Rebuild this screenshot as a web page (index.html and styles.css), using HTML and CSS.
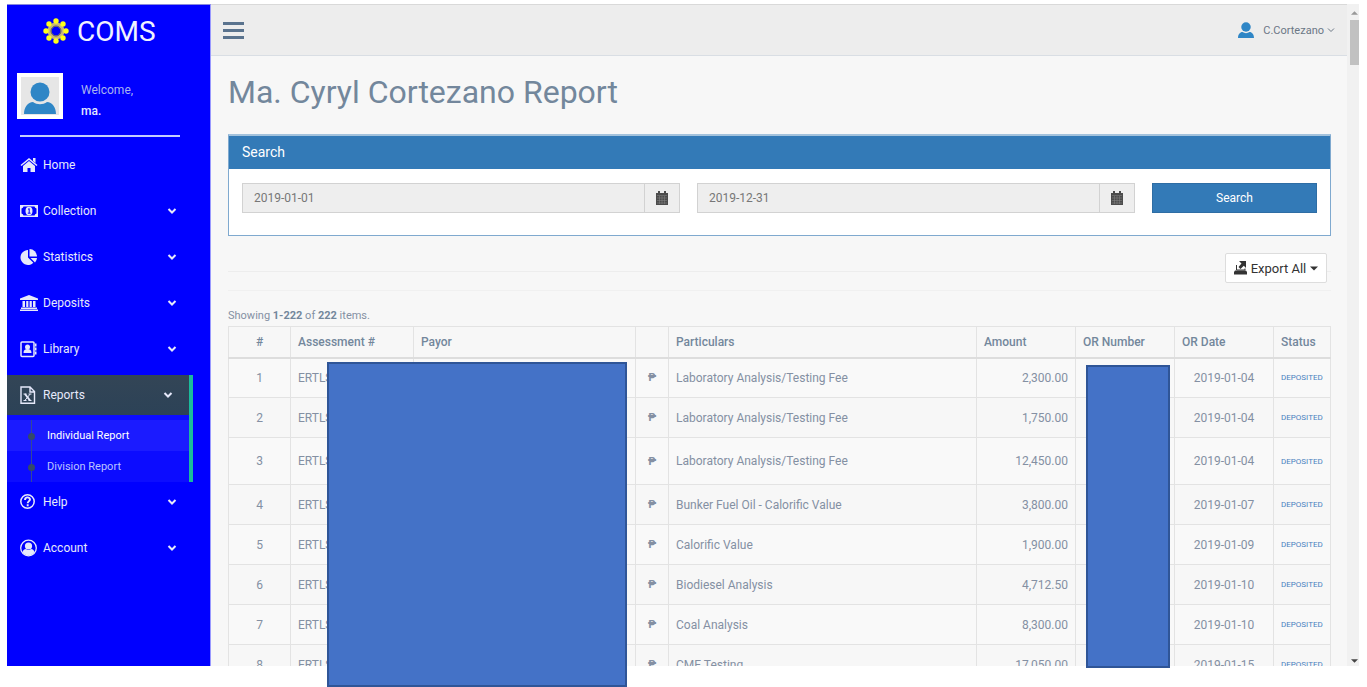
FILE: index.html
```html
<!DOCTYPE html>
<html lang="en">
<head>
    <meta charset="UTF-8">
    <meta name="viewport" content="width=device-width, initial-scale=1.0">
    <title>COMS - Individual Report</title>
    <link rel="stylesheet" href="styles.css">
</head>
<body>

<!-- shared icons -->
<svg class="sprite" aria-hidden="true">
    <symbol id="chevron" viewBox="0 0 10 10"><path d="M1.5 3 5 6.5 8.500 3" fill="none" stroke="currentColor" stroke-width="2"/></symbol>
    <symbol id="user" viewBox="0 0 32 32"><circle cx="16" cy="10" r="9.500"/><path d="M0 32c0-7 4-12 9-12 4 3 10 3 14 0 5 0 9 5 9 12z"/></symbol>
    <symbol id="calendar" viewBox="0 0 12 14"><path d="M0 2h12v12H0z"/><path d="M2 0h2v3H2zM8 0h2v3H8z"/><path d="M1 4.500h10M1 7h10M1 9.500h10M1 12h10M3.500 5v8M6 5v8M8.500 5v8" stroke="#888" stroke-width=".5"/></symbol>
</svg>

<div class="window">
    <div class="app">
        <aside class="sidebar">
            <a class="brand" href="#">
                <svg width="26" height="26" viewBox="0 0 26 26">
                    <circle cx="13" cy="13" r="6.500" fill="none" stroke="#c9b878" stroke-width="4"/>
                    <circle cx="13" cy="13" r="5" fill="none" stroke="#5a5a66" stroke-width="1"/>
                    <g fill="#ffff1a">
                        <circle cx="13" cy="3" r="2.700"/><circle cx="20" cy="6" r="2.700"/><circle cx="23" cy="13" r="2.700"/><circle cx="20" cy="20" r="2.700"/>
                        <circle cx="13" cy="23" r="2.700"/><circle cx="6" cy="20" r="2.700"/><circle cx="3" cy="13" r="2.700"/><circle cx="6" cy="6" r="2.700"/>
                    </g>
                </svg>
                <span>COMS</span>
            </a>

            <div class="profile">
                <div class="avatar"><svg><use href="#user"/></svg></div>
                <div class="profile-info">
                    <span>Welcome,</span>
                    <strong>ma.</strong>
                </div>
            </div>

            <nav class="menu">
                <a href="#">
                    <svg class="icon" viewBox="0 0 18 18"><path d="M9 5 3 10v6h4.500v-4h3v4H15v-6z"/><path d="M1 9.500 9 3l8 6.500" fill="none" stroke="currentColor" stroke-width="1.500"/><path d="M13 2h2.500v5L13 5z"/></svg>
                    Home
                </a>
                <a href="#">
                    <svg class="icon" viewBox="0 0 18 18"><path fill-rule="evenodd" d="M0 3h18v12H0zM3.500 4.500a2.500 2.500 0 0 1-2 2v5a2.500 2.500 0 0 1 2 2h11a2.500 2.500 0 0 1 2-2v-5a2.500 2.500 0 0 1-2-2z"/><ellipse cx="9" cy="9" rx="3.500" ry="4.200"/><path d="M8 7.500 9.200 6.500v4.500M7.800 11.200h2.800" fill="none" stroke="#00f" stroke-width="1"/></svg>
                    Collection
                    <svg class="chevron"><use href="#chevron"/></svg>
                </a>
                <a href="#">
                    <svg class="icon" viewBox="0 0 18 18"><path d="M8 2v7.500l5.300 5.300A7.500 7.500 0 1 1 8 2z"/><path d="M9.500 1A7.500 7.500 0 0 1 17 8.500H9.500z"/><path d="M10.500 10H17a7 7 0 0 1-2 4.500z"/></svg>
                    Statistics
                    <svg class="chevron"><use href="#chevron"/></svg>
                </a>
                <a href="#">
                    <svg class="icon" viewBox="0 0 18 18"><path d="M9 1 18 4.500V6H0V4.500zM2.500 7H5v6H2.500zM6.200 7h2.200v6H6.200zM9.600 7h2.200v6H9.600zM13 7h2.500v6H13zM1 13.500h16V15H1zM0 15.500h18V17H0z"/></svg>
                    Deposits
                    <svg class="chevron"><use href="#chevron"/></svg>
                </a>
                <a href="#">
                    <svg class="icon" viewBox="0 0 18 18"><rect x="1" y="2" width="13" height="14.500" rx="1" fill="none" stroke="currentColor" stroke-width="1.500"/><circle cx="7.500" cy="7" r="2.500"/><path d="M3.500 13c0-3 1.500-4 4-4s4 1 4 4zM15 3.500h1.500v3H15zM15 7.500h1.500v3H15zM15 11.500h1.500v3H15z"/></svg>
                    Library
                    <svg class="chevron"><use href="#chevron"/></svg>
                </a>
                <div class="open">
                    <a class="active" href="#">
                        <svg class="icon" viewBox="0 0 18 18"><path d="M1 1h9l4.500 4.500v11.700H1zM10 1v5h4.500" fill="none" stroke="currentColor" stroke-width="1.400"/><path d="M5 8l5 6.500" fill="none" stroke="currentColor" stroke-width="2"/><path d="M10.200 8 4.800 14.500M3.500 8h3M8.500 8h3M3.500 14.500h3M8.500 14.500h3" fill="none" stroke="currentColor" stroke-width="1"/></svg>
                        Reports
                        <svg class="chevron"><use href="#chevron"/></svg>
                    </a>
                    <ul class="submenu">
                        <li class="current"><a href="#">Individual Report</a></li>
                        <li><a href="#">Division Report</a></li>
                    </ul>
                </div>
                <a href="#">
                    <svg class="icon" viewBox="0 0 18 18"><circle cx="7.500" cy="8.500" r="6.700" fill="none" stroke="currentColor" stroke-width="1.500"/><path d="M5 7c0-3.500 5-3.300 5-.5 0 1.500-2.300 1.800-2.300 3.700M7.700 11.200v2" fill="none" stroke="currentColor" stroke-width="1.900"/></svg>
                    Help
                    <svg class="chevron"><use href="#chevron"/></svg>
                </a>
                <a href="#">
                    <svg class="icon" viewBox="0 0 18 18"><circle cx="8.500" cy="9" r="7.800" fill="none" stroke="currentColor" stroke-width="1.300"/><circle cx="8.500" cy="7" r="3.600"/><path d="M2.500 13c.5-2 2-3 3.500-3 1.500 1.300 3.500 1.300 5 0 1.500 0 3 1 3.500 3a7 7 0 0 1-12 0z"/></svg>
                    Account
                    <svg class="chevron"><use href="#chevron"/></svg>
                </a>
            </nav>
        </aside>

        <main class="content">
            <header class="topbar">
                <button class="toggle" type="button" aria-label="Toggle menu"><i></i><i></i><i></i></button>
                <a class="account" href="#">
                    <svg class="account-pic"><use href="#user"/></svg>
                    C.Cortezano
                    <svg class="caret-thin" viewBox="0 0 8 8"><path d="M1 2.500 4 5.500 7 2.500" fill="none" stroke="currentColor"/></svg>
                </a>
            </header>

            <div class="page">
                <h1>Ma. Cyryl Cortezano Report</h1>

                <section class="panel">
                    <h2>Search</h2>
                    <form class="search-form">
                        <div class="date-group">
                            <input type="text" value="2019-01-01" aria-label="Start date" readonly>
                            <button type="button" aria-label="Pick start date"><svg width="12" height="14"><use href="#calendar"/></svg></button>
                        </div>
                        <div class="date-group">
                            <input type="text" value="2019-12-31" aria-label="End date" readonly>
                            <button type="button" aria-label="Pick end date"><svg width="12" height="14"><use href="#calendar"/></svg></button>
                        </div>
                        <button class="btn-search" type="button">Search</button>
                    </form>
                </section>

                <div class="toolbar">
                    <button class="btn-export" type="button">
                        <svg width="13" height="14" viewBox="0 0 13 14"><path d="M5 0h7v7L9.800 4.800 6.500 8 4.500 6 7.500 2.500z"/><path d="M2.500 4v5H11V7.500" fill="none" stroke="currentColor"/><path d="M1 9.500h11l1 1.500v2.500H0V11z"/></svg>
                        Export All
                        <svg width="8" height="5" viewBox="0 0 8 5"><path d="M0 .5h8L4 4.500z"/></svg>
                    </button>
                </div>

                <p class="summary">Showing <b>1-222</b> of <b>222</b> items.</p>

                <table class="report">
                    <colgroup>
                        <col class="c-num"><col class="c-assess"><col class="c-payor"><col class="c-peso"><col>
                        <col class="c-mid"><col class="c-mid"><col class="c-mid"><col class="c-status">
                    </colgroup>
                    <thead>
                        <tr><th class="center">#</th><th>Assessment #</th><th>Payor</th><th></th><th>Particulars</th><th>Amount</th><th>OR Number</th><th>OR Date</th><th>Status</th></tr>
                    </thead>
                    <tbody>
                        <tr><td class="center">1</td><td>ERTLS</td><td></td><td class="peso">₱</td><td>Laboratory Analysis/Testing Fee</td><td class="amount">2,300.00</td><td></td><td class="center">2019-01-04</td><td class="status">DEPOSITED</td></tr>
                        <tr><td class="center">2</td><td>ERTLS</td><td></td><td class="peso">₱</td><td>Laboratory Analysis/Testing Fee</td><td class="amount">1,750.00</td><td></td><td class="center">2019-01-04</td><td class="status">DEPOSITED</td></tr>
                        <tr class="tall"><td class="center">3</td><td>ERTLS</td><td></td><td class="peso">₱</td><td>Laboratory Analysis/Testing Fee</td><td class="amount">12,450.00</td><td></td><td class="center">2019-01-04</td><td class="status">DEPOSITED</td></tr>
                        <tr><td class="center">4</td><td>ERTLS</td><td></td><td class="peso">₱</td><td>Bunker Fuel Oil - Calorific Value</td><td class="amount">3,800.00</td><td></td><td class="center">2019-01-07</td><td class="status">DEPOSITED</td></tr>
                        <tr><td class="center">5</td><td>ERTLS</td><td></td><td class="peso">₱</td><td>Calorific Value</td><td class="amount">1,900.00</td><td></td><td class="center">2019-01-09</td><td class="status">DEPOSITED</td></tr>
                        <tr><td class="center">6</td><td>ERTLS</td><td></td><td class="peso">₱</td><td>Biodiesel Analysis</td><td class="amount">4,712.50</td><td></td><td class="center">2019-01-10</td><td class="status">DEPOSITED</td></tr>
                        <tr><td class="center">7</td><td>ERTLS</td><td></td><td class="peso">₱</td><td>Coal Analysis</td><td class="amount">8,300.00</td><td></td><td class="center">2019-01-10</td><td class="status">DEPOSITED</td></tr>
                        <tr><td class="center">8</td><td>ERTLS</td><td></td><td class="peso">₱</td><td>CME Testing</td><td class="amount">17,050.00</td><td></td><td class="center">2019-01-15</td><td class="status">DEPOSITED</td></tr>
                    </tbody>
                </table>
            </div>
        </main>

        <div class="scrollbar">
            <svg viewBox="0 0 8 5"><path d="M0 5h8L4 1z" fill="#999"/></svg>
            <div class="thumb"></div>
            <svg viewBox="0 0 8 5"><path d="M0 0h8L4 4z" fill="#444"/></svg>
        </div>
    </div>

    <!-- covers for the private columns -->
    <div class="cover cover-payor"></div>
    <div class="cover cover-or"></div>
</div>

</body>
</html>
```
FILE: styles.css
```css
* {
    box-sizing: border-box;
}
body {
    margin: 0;
    padding: 4px 8px 0 7px;
    height: 100vh;
    overflow: hidden;
    background: #fff;
    font-family: Roboto, "Liberation Sans", sans-serif;
    font-size: 12px;
    color: #8490a3;
}
a {
    color: inherit;
    text-decoration: none;
}
svg {
    fill: currentColor;
    flex: none;
}
button, input {
    font: inherit;
}
.sprite {
    display: none;
}
.window {
    position: relative;
}
.app {
    display: flex;
    height: calc(100vh - 25px);
    overflow: hidden;
}

/* sidebar */
.sidebar {
    flex: 0 0 204px;
    background: #00f;
    border-right: 1px solid #99f;
    border-top: 1px solid #88d;
    color: #e6e9fb;
}
.brand {
    display: flex;
    align-items: center;
    gap: 8px;
    height: 52px;
    padding-left: 36px;
    font-size: 28px;
    color: #f0f2ff;
}
.profile {
    display: flex;
    gap: 18px;
    margin: 16px 24px 0 10px;
    height: 62px;
}
.avatar {
    width: 46px;
    height: 46px;
    padding: 5px 3px 0;
    background: #e6e6e6;
    border: 4px solid #fff;
    color: #2f86c6;
}
.avatar svg {
    display: block;
    width: 32px;
    height: 32px;
}
.profile-info {
    display: flex;
    flex-direction: column;
    gap: 6px;
    padding-top: 10px;
    line-height: 15px;
    color: #a9b4f0;
}
.profile-info strong {
    font-weight: 500;
    color: #e4e8ff;
}
.menu {
    width: 186px;
}
.menu::before {
    content: "";
    display: block;
    height: 2px;
    margin: 0 13px 8px;
    background: #c4ccff;
}
.menu > a, .active {
    display: flex;
    align-items: center;
    gap: 5px;
    height: 40px;
    margin-bottom: 6px;
    padding: 0 16px 0 13px;
}
.icon {
    width: 18px;
    height: 18px;
}
.chevron {
    width: 10px;
    height: 10px;
    margin-left: auto;
}
.open {
    border-right: 4px solid #1abb9c;
    background: #0c0cff;
}
.menu .active {
    margin: 0;
    background: linear-gradient(#334556, #2c4257);
}
.submenu {
    margin: 0;
    padding: 5px 0 0;
    list-style: none;
    font-size: 11px;
}
.submenu li {
    position: relative;
    height: 31px;
    padding-left: 40px;
    line-height: 31px;
    color: #bcc3ff;
}
.submenu .current {
    background: #1b1bff;
    color: #fff;
}
.submenu li::before {
    content: "";
    position: absolute;
    top: 0;
    bottom: 0;
    left: 24px;
    border-left: 1px solid #33489a;
}
.submenu li::after {
    content: "";
    position: absolute;
    top: 13px;
    left: 21px;
    width: 7px;
    height: 7px;
    border-radius: 50%;
    background: #34496a;
}

/* main column */
.content {
    flex: 1;
    min-width: 0;
    background: #f7f7f7;
}
.topbar {
    display: flex;
    justify-content: space-between;
    align-items: center;
    height: 52px;
    padding: 0 12px;
    background: #ededed;
    border-top: 1px solid #d9d9d9;
    border-bottom: 1px solid #d9dee4;
}
.toggle {
    display: flex;
    flex-direction: column;
    gap: 4px;
    width: 21px;
    padding: 0;
    border: 0;
    background: none;
}
.toggle i {
    width: 21px;
    height: 3px;
    background: #5a738e;
}
.account {
    display: flex;
    align-items: center;
    gap: 3px;
    font-size: 11px;
    color: #6b7785;
}
.account-pic {
    width: 16px;
    height: 16px;
    margin-right: 6px;
    color: #2f86c6;
}
.caret-thin {
    width: 8px;
    height: 8px;
}
.page {
    padding: 17px 16px 0 17px;
}
h1 {
    margin: 0;
    font-size: 32px;
    font-weight: 400;
    line-height: 38px;
    color: #73879c;
}
.panel {
    margin-top: 23px;
    border: 1px solid #7fa9cf;
    border-top: 2px solid #a3c2dc;
    background: #fff;
}
.panel h2 {
    margin: 0;
    padding: 0 13px;
    background: #337ab7;
    font-size: 14px;
    font-weight: 400;
    line-height: 33px;
    color: #fff;
}
.search-form {
    display: grid;
    grid-template-columns: repeat(12, 1fr);
    gap: 17px;
    padding: 14px 13px 22px;
}
.date-group {
    grid-column: span 5;
    display: flex;
    height: 30px;
}
.date-group input {
    flex: 1;
    min-width: 0;
    padding: 0 11px;
    border: 1px solid #d2d2d2;
    background: #eee;
    color: #777;
}
.date-group button {
    display: flex;
    align-items: center;
    justify-content: center;
    width: 35px;
    border: 1px solid #d2d2d2;
    border-left: 0;
    background: #eee;
    color: #4c4c4c;
}
.btn-search {
    grid-column: span 2;
    border: 1px solid #2e6da4;
    background: #337ab7;
    color: #fff;
}
.toolbar {
    display: flex;
    justify-content: flex-end;
    height: 38px;
    margin-top: 17px;
    padding-right: 4px;
    border-bottom: 1px solid #f0f0f0;
    background: linear-gradient(#ededed, #ededed) 0 18px / 100% 1px no-repeat;
}
.btn-export {
    display: flex;
    align-items: center;
    justify-content: center;
    gap: 4px;
    width: 102px;
    height: 30px;
    padding: 0;
    border: 1px solid #ddd;
    border-radius: 2px;
    background: #fff;
    font-size: 13px;
    color: #333;
}
.summary {
    margin: 17px 0 2px;
    font-size: 11px;
    line-height: 16px;
}
.summary b {
    font-weight: 700;
    color: #73879c;
}

/* report table */
.report {
    width: 100%;
    table-layout: fixed;
    border-collapse: collapse;
}
.c-num {
    width: 62px;
}
.c-assess {
    width: 123px;
}
.c-payor {
    width: 222px;
}
.c-peso {
    width: 33px;
}
.c-mid {
    width: 99px;
}
.c-status {
    width: 57px;
}
.report th, .report td {
    padding: 0 7px;
    border: 1px solid #e3e3e3;
    text-align: left;
    white-space: nowrap;
}
.report th {
    height: 31px;
    border-bottom: 2px solid #ddd;
    font-weight: 500;
    color: #73879c;
}
.report td {
    height: 40px;
}
.report .tall td {
    height: 47px;
}
.report tbody tr:nth-child(odd) {
    background: #f9f9f9;
}
.report .center, .report .peso {
    text-align: center;
}
.report .peso {
    font-size: 11px;
    font-weight: 700;
}
.report .amount {
    text-align: right;
}
.report .status {
    font-size: 8px;
    color: #4a82bf;
}

/* fake window scrollbar */
.scrollbar {
    display: flex;
    flex-direction: column;
    flex: 0 0 12px;
    align-items: center;
    padding: 6px 0 2px 3px;
    background: #f1f1f1;
}
.scrollbar svg {
    width: 7px;
    height: 5px;
}
.thumb {
    width: 9px;
    height: 45px;
    margin: 5px 0 auto;
    background: #c1c1c1;
}

.cover {
    position: absolute;
    background: #4472c7;
    border: 2px solid #2f5597;
}
.cover-payor {
    top: 358px;
    left: 320px;
    width: 300px;
    height: 325px;
}
.cover-or {
    top: 361px;
    right: 189px;
    width: 84px;
    height: 303px;
}
```
